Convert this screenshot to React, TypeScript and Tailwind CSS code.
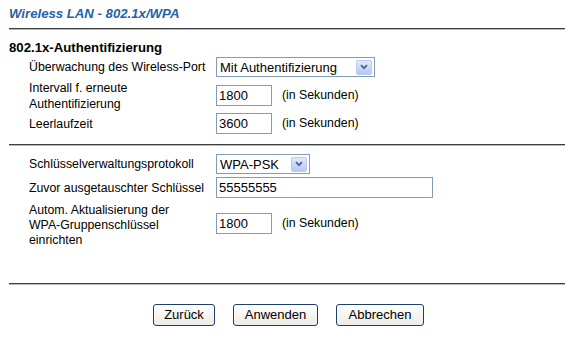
import React from "react";

function Chevron() {
  return (
    <span className="flex h-[15px] w-[16px] items-center justify-center rounded-[2px] border border-[#b9c9ef] bg-gradient-to-b from-[#e1eafe] to-[#b4c8f6]">
      <svg width="8" height="6" viewBox="0 0 8 6">
        <path d="M1 1.2 L4 4.2 L7 1.2" fill="none" stroke="#4d6185" strokeWidth="1.8" />
      </svg>
    </span>
  );
}

function Select({ value, width }: { value: string; width: string }) {
  return (
    <div className={`flex h-[20px] items-center justify-between border border-[#7f9db9] bg-white pl-[3px] pr-[2px] ${width}`}>
      <span className="text-[13px] leading-none text-black">{value}</span>
      <Chevron />
    </div>
  );
}

function Input({ value, width }: { value: string; width: string }) {
  return (
    <div className={`flex h-[21px] items-center border border-[#7f9db9] bg-white pl-[2px] ${width}`}>
      <span className="text-[13px] leading-none text-black">{value}</span>
    </div>
  );
}

function Line() {
  return <div className="mx-[9px] border-t border-b border-t-[#404040] border-b-[#b8b8b8]" />;
}

function Button({ label, width }: { label: string; width: string }) {
  return (
    <div className={`flex h-[22px] items-center justify-center rounded-[3px] border border-[#1c3f6e] bg-gradient-to-b from-white to-[#ecebe6] text-[13px] text-black ${width}`}>
      {label}
    </div>
  );
}

export default function App() {
  return (
    <div className="h-[349px] w-[574px] bg-white font-['Liberation_Sans',Arial,sans-serif] text-[12.3px] text-black">
      <div className="h-[28px] pl-[9px] pt-[4px] text-[13.2px] font-bold italic text-[#1f63a8]">
        Wireless LAN - 802.1x/WPA
      </div>
      <Line />
      <div className="mt-[10px] pl-[9px] text-[13.2px] font-bold leading-[15px]">802.1x-Authentifizierung</div>

      <div className="mt-[2px] flex h-[20px] items-center">
        <div className="w-[216px] pl-[29px] leading-[16px]">Überwachung des Wireless-Port</div>
        <Select value="Mit Authentifizierung" width="w-[159px]" />
      </div>

      <div className="mt-[8px] flex h-[21px] items-center">
        <div className="w-[216px] pl-[29px] leading-[16px]">
          Intervall f. erneute
          <br />
          Authentifizierung
        </div>
        <Input value="1800" width="w-[56px]" />
        <span className="ml-[10px]">(in Sekunden)</span>
      </div>

      <div className="mt-[7px] flex h-[21px] items-center">
        <div className="w-[216px] pl-[29px] leading-[16px]">Leerlaufzeit</div>
        <Input value="3600" width="w-[56px]" />
        <span className="ml-[10px]">(in Sekunden)</span>
      </div>

      <div className="mt-[10px]">
        <Line />
      </div>

      <div className="mt-[8px] flex h-[20px] items-center">
        <div className="w-[216px] pl-[29px] leading-[16px]">Schlüsselverwaltungsprotokoll</div>
        <Select value="WPA-PSK" width="w-[94px]" />
      </div>

      <div className="mt-[3px] flex h-[21px] items-center">
        <div className="w-[216px] pl-[29px] leading-[16px]">Zuvor ausgetauschter Schlüssel</div>
        <Input value="55555555" width="w-[217px]" />
      </div>

      <div className="mt-[3px] flex items-start">
        <div className="mt-[2px] w-[216px] pl-[29px] leading-[15px]">
          Autom. Aktualisierung der
          <br />
          WPA-Gruppenschlüssel
          <br />
          einrichten
        </div>
        <div className="mt-[12px] flex items-center">
          <Input value="1800" width="w-[56px]" />
          <span className="ml-[10px]">(in Sekunden)</span>
        </div>
      </div>

      <div className="mt-[35px]">
        <Line />
      </div>

      <div className="mt-[19px] flex justify-center gap-[18px] pl-[3px]">
        <Button label="Zurück" width="w-[62px]" />
        <Button label="Anwenden" width="w-[85px]" />
        <Button label="Abbrechen" width="w-[88px]" />
      </div>
    </div>
  );
}
